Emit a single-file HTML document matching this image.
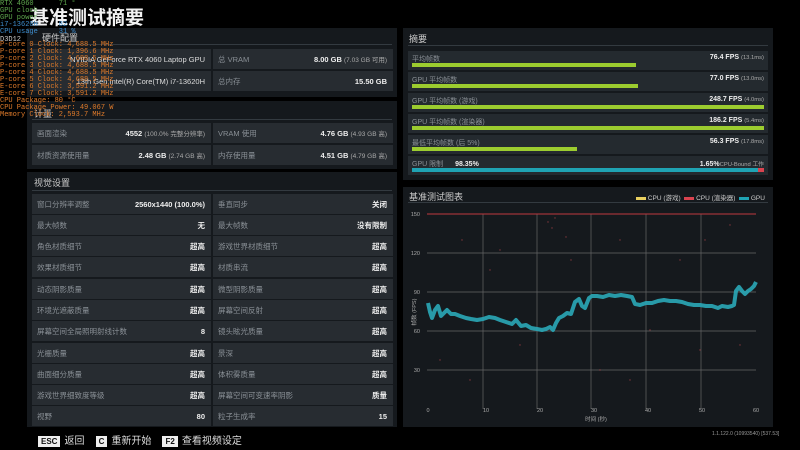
<!DOCTYPE html>
<html><head><meta charset="utf-8"><style>
*{margin:0;padding:0;box-sizing:border-box}
body{width:800px;height:450px;background:#000;position:relative;overflow:hidden;font-family:"Liberation Sans","Noto Sans CJK SC",sans-serif;color:#ddd}
.a{position:absolute}
.panel{position:absolute;background:#15191d}
.hdr{position:absolute;font-size:9px;color:#ccc}
.line{position:absolute;height:1px;background:#333a40}
.c{position:absolute;background:#272c31;height:20px;font-size:7.5px;color:#8a9096;display:flex;align-items:center;justify-content:space-between;padding:0 6px 0 5px;white-space:nowrap}
.c .r{color:#eee;font-weight:bold;font-size:7.5px}
.c .r small{font-weight:normal;color:#aaa;font-size:6.5px}
.s{position:absolute;left:408px;width:360px;height:19px;background:#242a2f;font-size:7px;color:#8a9096}
.s .l{position:absolute;left:4px;top:3px}
.s .r{position:absolute;right:4px;top:3px;color:#eee;font-weight:bold}
.s .r small{font-weight:normal;color:#aaa}
.s .b{position:absolute;left:4px;bottom:3px;height:4px;background:#9ccc2f}
.osd{position:absolute;left:0;font-family:"Liberation Mono",monospace;font-size:7px;line-height:7px;color:#e07b2a;white-space:pre}
.key{display:inline-block;background:#eee;color:#111;font-weight:bold;font-size:8px;padding:1px 3px;margin-right:4px}
</style></head><body>

<div class="a" style="left:30px;top:3px;font-size:19px;font-weight:bold;color:#f2f2f2">基准测试摘要</div>

<div class="panel" style="left:27px;top:28px;width:370px;height:69px"></div>
<div class="hdr" style="left:42px;top:31px">硬件配置</div>
<div class="line" style="left:32px;top:44px;width:360px"></div>
<div class="c" style="left:32px;top:49px;width:179px;justify-content:flex-end"><span class="r" style="font-weight:normal;color:#ddd">NVIDIA GeForce RTX 4060 Laptop GPU</span></div>
<div class="c" style="left:213px;top:49px;width:180px"><span>总 VRAM</span><span class="r">8.00 GB <small>(7.03 GB 可用)</small></span></div>
<div class="c" style="left:32px;top:71px;width:179px;justify-content:flex-end"><span class="r" style="font-weight:normal;color:#ddd">13th Gen Intel(R) Core(TM) i7-13620H</span></div>
<div class="c" style="left:213px;top:71px;width:180px"><span>总内存</span><span class="r">15.50 GB</span></div>

<div class="panel" style="left:27px;top:101px;width:370px;height:68px"></div>
<div class="hdr" style="left:34px;top:107px">计量</div>
<div class="line" style="left:32px;top:119px;width:360px"></div>
<div class="c" style="left:32px;top:123px;width:179px"><span>画面渲染</span><span class="r">4552 <small>(100.0% 完整分辨率)</small></span></div>
<div class="c" style="left:213px;top:123px;width:180px"><span>VRAM 使用</span><span class="r">4.76 GB <small>(4.93 GB 高)</small></span></div>
<div class="c" style="left:32px;top:145px;width:179px"><span>材质资源使用量</span><span class="r">2.48 GB <small>(2.74 GB 高)</small></span></div>
<div class="c" style="left:213px;top:145px;width:180px"><span>内存使用量</span><span class="r">4.51 GB <small>(4.79 GB 高)</small></span></div>

<div class="panel" style="left:27px;top:172px;width:370px;height:255px"></div>
<div class="hdr" style="left:34px;top:176px">视觉设置</div>
<div class="line" style="left:32px;top:190px;width:360px"></div>
<div class="c" style="left:32px;top:194px;width:179px"><span>窗口分辨率调整</span><span class="r">2560x1440 (100.0%)</span></div>
<div class="c" style="left:213px;top:194px;width:180px"><span>垂直同步</span><span class="r">关闭</span></div>
<div class="c" style="left:32px;top:215px;width:179px"><span>最大帧数</span><span class="r">无</span></div>
<div class="c" style="left:213px;top:215px;width:180px"><span>最大帧数</span><span class="r">没有限制</span></div>
<div class="c" style="left:32px;top:236px;width:179px"><span>角色材质细节</span><span class="r">超高</span></div>
<div class="c" style="left:213px;top:236px;width:180px"><span>游戏世界材质细节</span><span class="r">超高</span></div>
<div class="c" style="left:32px;top:257px;width:179px"><span>效果材质细节</span><span class="r">超高</span></div>
<div class="c" style="left:213px;top:257px;width:180px"><span>材质串流</span><span class="r">超高</span></div>
<div class="c" style="left:32px;top:279px;width:179px"><span>动态阴影质量</span><span class="r">超高</span></div>
<div class="c" style="left:213px;top:279px;width:180px"><span>微型阴影质量</span><span class="r">超高</span></div>
<div class="c" style="left:32px;top:300px;width:179px"><span>环境光遮蔽质量</span><span class="r">超高</span></div>
<div class="c" style="left:213px;top:300px;width:180px"><span>屏幕空间反射</span><span class="r">超高</span></div>
<div class="c" style="left:32px;top:321px;width:179px"><span>屏幕空间全局照明射线计数</span><span class="r">8</span></div>
<div class="c" style="left:213px;top:321px;width:180px"><span>镜头眩光质量</span><span class="r">超高</span></div>
<div class="c" style="left:32px;top:343px;width:179px"><span>光栅质量</span><span class="r">超高</span></div>
<div class="c" style="left:213px;top:343px;width:180px"><span>景深</span><span class="r">超高</span></div>
<div class="c" style="left:32px;top:364px;width:179px"><span>曲面细分质量</span><span class="r">超高</span></div>
<div class="c" style="left:213px;top:364px;width:180px"><span>体积雾质量</span><span class="r">超高</span></div>
<div class="c" style="left:32px;top:385px;width:179px"><span>游戏世界细致度等级</span><span class="r">超高</span></div>
<div class="c" style="left:213px;top:385px;width:180px"><span>屏幕空间可变速率阴影</span><span class="r">质量</span></div>
<div class="c" style="left:32px;top:406px;width:179px"><span>视野</span><span class="r">80</span></div>
<div class="c" style="left:213px;top:406px;width:180px"><span>粒子生成率</span><span class="r">15</span></div>

<div class="a" style="left:38px;top:432px;font-size:10px;color:#ddd;white-space:nowrap"><span class="key">ESC</span>返回&nbsp;&nbsp;&nbsp;&nbsp;<span class="key">C</span>重新开始&nbsp;&nbsp;&nbsp;&nbsp;<span class="key">F2</span>查看视频设定</div>

<div class="panel" style="left:403px;top:28px;width:370px;height:152px"></div>
<div class="hdr" style="left:409px;top:32px">摘要</div>
<div class="line" style="left:408px;top:45px;width:360px"></div>
<div class="s" style="top:51px"><span class="l">平均帧数</span><span class="r">76.4 FPS <small>(13.1ms)</small></span><div class="b" style="width:224px"></div></div>
<div class="s" style="top:72px"><span class="l">GPU 平均帧数</span><span class="r">77.0 FPS <small>(13.0ms)</small></span><div class="b" style="width:226px"></div></div>
<div class="s" style="top:93px"><span class="l">GPU 平均帧数 (游戏)</span><span class="r">248.7 FPS <small>(4.0ms)</small></span><div class="b" style="width:352px"></div></div>
<div class="s" style="top:114px"><span class="l">GPU 平均帧数 (渲染器)</span><span class="r">186.2 FPS <small>(5.4ms)</small></span><div class="b" style="width:352px"></div></div>
<div class="s" style="top:135px"><span class="l">最低平均帧数 (后 5%)</span><span class="r">56.3 FPS <small>(17.8ms)</small></span><div class="b" style="width:165px"></div></div>
<div class="s" style="top:156px"><span class="l">GPU 限制 <b style="color:#eee;margin-left:10px">98.35%</b></span><span class="r">1.65%<small>CPU-Bound 工作</small></span><div class="b" style="width:346px;background:#1fa3b3"></div><div class="b" style="left:350px;width:6px;background:#d9434f"></div></div>

<div class="panel" style="left:403px;top:187px;width:370px;height:240px"></div>
<div class="hdr" style="left:409px;top:190px">基准测试图表</div>
<div class="line" style="left:408px;top:202px;width:360px"></div>
<div class="a" style="left:636px;top:192px;font-size:6.5px;color:#ccc;white-space:nowrap">
<span style="display:inline-block;width:10px;height:3px;background:#e8cf5f;vertical-align:middle"></span> CPU (游戏)&nbsp;
<span style="display:inline-block;width:10px;height:3px;background:#d9434f;vertical-align:middle"></span> CPU (渲染器)&nbsp;
<span style="display:inline-block;width:10px;height:3px;background:#1fa3b3;vertical-align:middle"></span> GPU</div>
<svg class="a" style="left:403px;top:187px" width="370" height="240" viewBox="403 187 370 240">
<g stroke="#666" stroke-width="0.7">
<line x1="427" y1="253" x2="756" y2="253"/><line x1="427" y1="292" x2="756" y2="292"/><line x1="427" y1="331" x2="756" y2="331"/><line x1="427" y1="370" x2="756" y2="370"/>
<line x1="483" y1="214" x2="483" y2="409"/><line x1="537" y1="214" x2="537" y2="409"/><line x1="591" y1="214" x2="591" y2="409"/><line x1="646" y1="214" x2="646" y2="409"/><line x1="701" y1="214" x2="701" y2="409"/>
</g>
<line x1="427" y1="214" x2="756" y2="214" stroke="#c0393f" stroke-width="1"/>
<g font-size="5.5" fill="#aaa" font-family="Liberation Sans">
<text x="420" y="216" text-anchor="end">150</text><text x="420" y="255" text-anchor="end">120</text><text x="420" y="294" text-anchor="end">90</text><text x="420" y="333" text-anchor="end">60</text><text x="420" y="372" text-anchor="end">30</text>
<text x="428" y="412" text-anchor="middle">0</text><text x="486" y="412" text-anchor="middle">10</text><text x="540" y="412" text-anchor="middle">20</text><text x="594" y="412" text-anchor="middle">30</text><text x="648" y="412" text-anchor="middle">40</text><text x="702" y="412" text-anchor="middle">50</text><text x="756" y="412" text-anchor="middle">60</text>
<text x="596" y="421" text-anchor="middle">时间 (秒)</text>
<text x="416" y="312" transform="rotate(-90 416 312)" text-anchor="middle">帧数 (FPS)</text>
</g>
<polyline fill="none" stroke="#2aa9b8" stroke-width="4" stroke-linejoin="round" opacity="0.9" points="428,303 430,312 432,318 435,310 438,306 441,316 444,313 447,310 451,314 455,314 460,316 466,318 471,319 477,320 483,319 489,317 495,318 500,320 506,322 512,324 516,320 521,326 526,325 531,328 537,329 542,330 546,329 550,327 553,330 556,323 559,318 563,316 567,313 571,314 575,302 579,299 582,306 585,308 589,298 592,296 597,296 603,297 609,295 615,296 621,295 627,296 632,297 635,304 640,305 646,303 652,303 658,301 664,300 670,301 676,301 682,302 688,304 694,305 700,305 706,306 712,306 718,308 722,306 728,307 732,306 734,305 736,291 739,287 742,291 745,294 748,291 751,289 754,286 756,282"/>
<g fill="#b0444a" opacity="0.7">
<circle cx="548" cy="222" r="0.7"/><circle cx="552" cy="228" r="0.7"/><circle cx="555" cy="218" r="0.7"/><circle cx="566" cy="237" r="0.7"/><circle cx="571" cy="260" r="0.7"/><circle cx="462" cy="240" r="0.7"/><circle cx="500" cy="250" r="0.7"/><circle cx="620" cy="240" r="0.7"/><circle cx="680" cy="260" r="0.7"/><circle cx="730" cy="225" r="0.7"/><circle cx="440" cy="360" r="0.7"/><circle cx="470" cy="380" r="0.7"/><circle cx="600" cy="370" r="0.7"/><circle cx="520" cy="345" r="0.7"/><circle cx="700" cy="350" r="0.7"/><circle cx="650" cy="330" r="0.7"/><circle cx="740" cy="345" r="0.7"/><circle cx="490" cy="270" r="0.7"/><circle cx="705" cy="240" r="0.7"/><circle cx="630" cy="380" r="0.7"/>
</g>
</svg>
<div class="a" style="left:712px;top:431px;font-size:5px;color:#999">1.1.122.0 (10993540) [537.53]</div>

<div class="osd" style="top:1px;color:#5fa84e">RTX 4060      71 °</div>
<div class="osd" style="top:8px;color:#5fa84e">GPU clock</div>
<div class="osd" style="top:15px;color:#5fa84e">GPU power</div>
<div class="osd" style="top:22px;color:#3f8fd0">i7-13620H     82</div>
<div class="osd" style="top:29px;color:#3f8fd0">CPU usage     31 %</div>
<div class="osd" style="top:37px;color:#ccc">D3D12</div>
<div class="osd" style="top:42px">P-core 0 Clock: 4,688.5 MHz
P-core 1 Clock: 1,396.6 MHz
P-core 2 Clock: 4,688.5 MHz
P-core 3 Clock: 4,688.5 MHz
P-core 4 Clock: 4,688.5 MHz
P-core 5 Clock: 4,688.5 MHz
E-core 6 Clock: 3,591.2 MHz
E-core 7 Clock: 3,591.2 MHz
CPU Package: 80 °C
CPU Package Power: 49.067 W
Memory Clock: 2,593.7 MHz</div>
</body></html>
